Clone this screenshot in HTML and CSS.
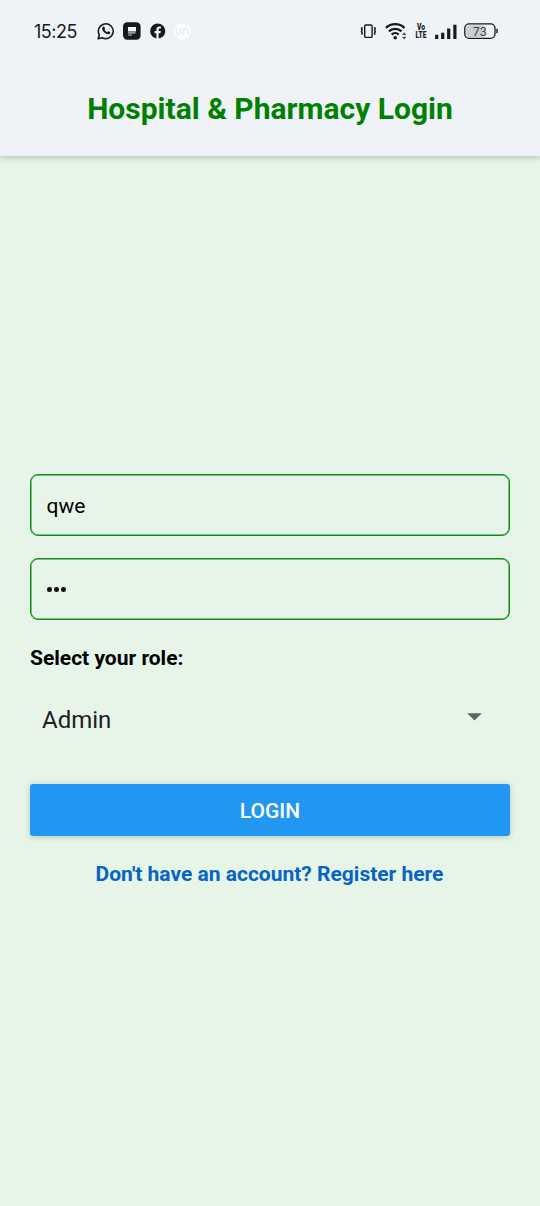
FILE: index.html
```html
<!DOCTYPE html>
<html lang="en">
<head>
<meta charset="utf-8">
<title>Hospital &amp; Pharmacy Login</title>
<link rel="stylesheet" href="styles.css">
</head>
<body>
<header class="top">
  <div class="status">
    <span class="time">15:25</span>
    <div class="notices">
      <svg width="18" height="18" viewBox="0 0 18 18">
        <path d="M1.2 16.8 2.3 12.8A7.4 7.4 0 1 1 5.2 15.7Z" fill="none" stroke="#17191c" stroke-width="1.6" stroke-linejoin="round"/>
        <path d="M6.1 4.7c.5-.4 1-.3 1.2.1l.7 1.6c.1.4-.6 1-.6 1.2.5 1.1 1.4 2 2.6 2.5.4.1.9-1 1.3-.9l1.7.8c.5.3.2 1.3-.2 1.7-1 1-2.700.6-4-.1C7.100 10.600 5.900 9.200 5.400 8 4.900 6.700 5.100 5.500 6.100 4.700Z" fill="#17191c"/>
      </svg>
      <svg width="18" height="18" viewBox="0 0 18 18">
        <rect x="0" y=".2" width="17.600" height="17.600" rx="4.200" fill="#17191c"/>
        <path d="M5 5h8v4.500H5z" fill="#f0f3f8"/>
        <path d="M5 10.900h7.500M5 13h4" stroke="#c5c8cc" stroke-width="1.200"/>
      </svg>
      <svg class="fb" width="16" height="16" viewBox="0 0 16 16">
        <circle cx="7.700" cy="8" r="7.600" fill="#17191c"/>
        <path d="M6.400 16v-5.700H4.500V8h1.900V6.500c0-2 1.100-3 2.800-3l1.700.1v1.900h-1c-1 0-1.300.5-1.300 1.200V8h2.200l-.4 2.300H8.600V16Z" fill="#f0f3f8"/>
      </svg>
      <svg class="un" width="17" height="17" viewBox="0 0 17 17">
        <circle cx="8.500" cy="8.500" r="8.200" fill="#fcfdfe"/>
        <path d="M2.700 5v4.200a2 2 0 0 0 4 0V5M9.500 12V7.500a2.100 2.100 0 0 1 4.200 0V12" fill="none" stroke="#e9ecf1" stroke-width="1.600"/>
      </svg>
    </div>
    <div class="system">
      <svg width="16" height="18" viewBox="0 0 16 18">
        <rect x="4.700" y="3" width="7.400" height="12.400" rx="1.200" fill="none" stroke="#17191c" stroke-width="1.400"/>
        <path d="M2.300 5.200 1.500 6.600l.8 1.600-.8 1.500.8 1.500-.6 1.500M14.500 5.200l.8 1.400-.8 1.600.8 1.500-.8 1.500.6 1.500" fill="none" stroke="#17191c" stroke-width="1.400"/>
      </svg>
      <svg class="wifi" width="22" height="18" viewBox="0 0 22 18">
        <path d="M.9 5.900a13.300 13.300 0 0 1 18.600 0M3.900 9.400a9 9 0 0 1 12.600 0M6.700 12.600a5 5 0 0 1 7 0" fill="none" stroke="#17191c" stroke-width="2.300"/>
        <circle cx="10.200" cy="15.700" r="1.800" fill="#17191c"/>
        <path d="m17 13 2.200-2.700 2.200 2.700ZM17 14.700l2.200 2.700 2.200-2.700Z" fill="#4b4e52"/>
      </svg>
      <span class="volte">Vo<br>LTE</span>
      <svg class="signal" width="22" height="18" viewBox="0 0 22 18">
        <path d="M1.700 17v-4.300M7.700 17v-6.300M13.700 17V6.500M19.900 17V2.700" stroke="#17191c" stroke-width="3.200" stroke-linecap="butt"/>
      </svg>
      <svg class="battery" width="34" height="18" viewBox="0 0 34 18">
        <rect x="2.200" y="3.200" width="19" height="11.800" rx="3" fill="#c9ccd0"/>
        <rect x=".8" y="1.900" width="30.200" height="14.400" rx="4.300" fill="none" stroke="#17191c" stroke-width="1.300"/>
        <path d="M33 6.800v4.400" stroke="#17191c" stroke-width="1.400"/>
        <text x="15.900" y="13.500" text-anchor="middle" class="level">73</text>
      </svg>
    </div>
  </div>
  <h1 class="title">Hospital &amp; Pharmacy Login</h1>
</header>
<main class="form">
  <div class="field">qwe</div>
  <div class="field secret"><i></i><i></i><i></i></div>
  <div class="label">Select your role:</div>
  <div class="picker">
    <span>Admin</span>
    <svg width="15" height="8" viewBox="0 0 15 8"><path d="M.2.200h14.600L7.500 7.500Z" fill="#5c665d"/></svg>
  </div>
  <div class="login">LOGIN</div>
  <div class="register">Don't have an account? Register here</div>
</main>
</body>
</html>
```
FILE: styles.css
```css
* { box-sizing: border-box; }
body {
  margin: 0;
  width: 540px;
  height: 1206px;
  display: flex;
  flex-direction: column;
  overflow: hidden;
  background: #e6f5e8;
  font-family: Roboto, "Noto Sans", sans-serif;
  color: #000;
}
.top {
  height: 156px;
  background: #eff3f8;
  box-shadow: 0 1px 7px rgba(0, 0, 0, .25);
}
.status {
  height: 62px;
  padding: 0 42px 0 34px;
  display: flex;
  align-items: center;
}
.status svg { display: block; flex: none; }
.time {
  width: 63px;
  padding-top: 2px;
  font: 400 18px/22px Inter, sans-serif;
  letter-spacing: -.5px;
  color: #17191c;
}
.notices, .system { display: flex; align-items: center; }
.notices { gap: 8px; }
.fb { margin-left: 1px; }
.system { margin-left: auto; }
.wifi { margin-left: 9px; }
.volte {
  width: 12px;
  margin-left: 8px;
  display: flex;
  justify-content: center;
  text-align: center;
  font: 900 9px/8px Roboto, sans-serif;
  transform: scaleX(.74);
  color: #17191c;
}
.signal { margin-left: 8px; }
.battery { margin-left: 7px; }
.level { font: 400 12px Inter, sans-serif; fill: #3f4246; }
.title {
  margin: 0;
  padding-top: 29px;
  text-align: center;
  font-size: 30px;
  line-height: 36px;
  font-weight: 700;
  color: #008000;
}
.form {
  padding: 318px 30px 0;
  display: flex;
  flex-direction: column;
}
.field {
  height: 62px;
  margin-bottom: 22px;
  padding: 2px 15.5px 0;
  display: flex;
  align-items: center;
  border: 1px solid #138a13;
  border-radius: 8px;
  box-shadow: inset 0 0 0 .5px #138a13;
  font-size: 21px;
  line-height: 26px;
}
.secret { gap: 2.5px; padding: 1px 0 0 16px; }
.secret i { width: 4.6px; height: 4.6px; border-radius: 50%; background: #111; }
.label {
  height: 32px;
  font-size: 21px;
  line-height: 32px;
  font-weight: 700;
}
.picker {
  height: 110px;
  padding: 0 28.500px 19px 12px;
  display: flex;
  align-items: center;
  justify-content: space-between;
  font-size: 24px;
  color: #1c211d;
}
.picker svg { margin-bottom: 6px; }
.login {
  height: 52px;
  border-radius: 3px;
  background: #2196f3;
  box-shadow: 0 1px 6px rgba(0, 0, 0, .2);
  text-align: center;
  font-size: 21px;
  line-height: 54px;
  font-weight: 500;
  color: #fff;
}
.register {
  margin-top: 22px;
  padding-right: 1px;
  text-align: center;
  font-size: 21px;
  line-height: 32px;
  font-weight: 700;
  color: #0664c4;
}
```
